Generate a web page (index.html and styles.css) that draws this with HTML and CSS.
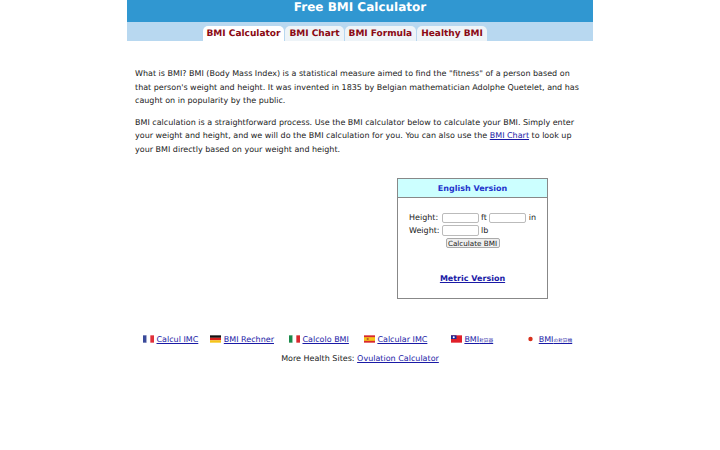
FILE: index.html
```html
<!DOCTYPE html>
<html lang="en">
<head>
<meta charset="utf-8">
<title>Free BMI Calculator</title>
<link rel="stylesheet" href="styles.css">
</head>
<body>
<div class="page">
  <header class="banner"><h1>Free BMI Calculator</h1></header>
  <nav class="tabbar">
    <a class="tab active" href="#">BMI Calculator</a>
    <a class="tab" href="#">BMI Chart</a>
    <a class="tab" href="#">BMI Formula</a>
    <a class="tab" href="#">Healthy BMI</a>
  </nav>
  <main class="content">
    <p>What is BMI? BMI (Body Mass Index) is a statistical measure aimed to find the "fitness" of a person based on that person's weight and height. It was invented in 1835 by Belgian mathematician Adolphe Quetelet, and has caught on in popularity by the public.</p>
    <p>BMI calculation is a straightforward process. Use the BMI calculator below to calculate your BMI. Simply enter your weight and height, and we will do the BMI calculation for you. You can also use the <a href="#">BMI Chart</a> to look up your BMI directly based on your weight and height.</p>
    <div class="calc-row">
      <section class="calc">
        <h2 class="calc-head">English Version</h2>
        <div class="calc-body">
          <div class="field"><label class="lbl">Height:</label><input class="num" type="text"><span>ft</span><input class="num" type="text"><span class="unit-in">in</span></div>
          <div class="field"><label class="lbl">Weight:</label><input class="num" type="text"><span>lb</span></div>
          <div class="submit"><button type="button">Calculate BMI</button></div>
          <a class="metric" href="#">Metric Version</a>
        </div>
      </section>
    </div>
    <div class="langs">
      <span class="lang fr"><svg class="flag" viewBox="0 0 12 8"><rect width="4" height="8" fill="#3a4a9a"/><rect x="4" width="4" height="8" fill="#fff"/><rect x="8" width="4" height="8" fill="#e0303a"/></svg><a href="#">Calcul IMC</a></span>
      <span class="lang de"><svg class="flag" viewBox="0 0 12 8"><rect width="12" height="2.7" fill="#111"/><rect y="2.7" width="12" height="2.7" fill="#d8201c"/><rect y="5.4" width="12" height="2.6" fill="#f5c518"/></svg><a href="#">BMI Rechner</a></span>
      <span class="lang it"><svg class="flag" viewBox="0 0 12 8"><rect width="4" height="8" fill="#1a8a4a"/><rect x="4" width="4" height="8" fill="#fff"/><rect x="8" width="4" height="8" fill="#d8282e"/></svg><a href="#">Calcolo BMI</a></span>
      <span class="lang es"><svg class="flag" viewBox="0 0 12 8"><rect width="12" height="8" fill="#d8282e"/><rect y="2" width="12" height="4" fill="#f5c518"/><rect x="3" y="3" width="2" height="2" fill="#c0502a"/></svg><a href="#">Calcular IMC</a></span>
      <span class="lang tw"><svg class="flag" viewBox="0 0 12 8"><rect width="12" height="8" fill="#e0202a"/><rect width="6" height="4" fill="#1a2a9a"/><circle cx="3" cy="2" r="1.1" fill="#fff"/></svg><a href="#">BMI<span class="cjk">計算器</span></a></span>
      <span class="lang jp"><svg class="flag" viewBox="0 0 12 8"><rect width="12" height="8" fill="#fff"/><circle cx="6" cy="4" r="2.4" fill="#d8301c"/></svg><a href="#">BMI<span class="cjk">の計算機</span></a></span>
    </div>
    <p class="more">More Health Sites: <a href="#">Ovulation Calculator</a></p>
  </main>
</div>
</body>
</html>
```
FILE: styles.css
```css
html, body { margin: 0; padding: 0; background: #fff; }
body { font-family: "DejaVu Sans", sans-serif; font-size: 8px; color: #222; text-rendering: geometricPrecision; }
a { color: #1a1aa6; }
.page { width: 466px; margin: 0 auto; }
.banner { background: #3097d1; height: 22px; overflow: hidden; }
.banner h1 { margin: 0; color: #fff; font-size: 12px; line-height: 14px; text-align: center; font-weight: bold; }
.tabbar { background: #b8d8f0; height: 19px; display: flex; align-items: flex-end; gap: 1px; padding-left: 75.5px; }
.tab { background: #eef4f8; color: #8b0a14; font-weight: bold; font-size: 9px; line-height: 13px; padding: 2px 4px 0; border-radius: 5px 5px 0 0; text-decoration: none; }
.tab.active { background: #fff; }
.content { padding: 26px 8px 0; }
.content p { margin: 0 0 8px; line-height: 13.6px; }
.calc-row { display: flex; justify-content: flex-end; margin: 21px 37px 0 0; }
.calc { width: 149px; height: 119px; border: 1px solid #888; }
.calc-head { margin: 0; height: 18px; line-height: 19px; background: #ccffff; border-bottom: 1px solid #888; color: #2233cc; font-size: 8px; text-align: center; font-weight: bold; }
.calc-body { padding: 14px 11px 0; }
.field { display: flex; align-items: center; height: 12.5px; gap: 2px; }
.lbl { width: 31px; flex: none; white-space: nowrap; }
.unit-in { margin-left: 1px; }
.num { width: 37px; height: 10.5px; box-sizing: border-box; padding: 0; margin: 0; border: 1px solid #bbb; border-radius: 2px; background: #fff; }
.submit { text-align: center; margin-top: 1px; }
.submit button { font: 7.2px "DejaVu Sans", sans-serif; height: 10.5px; width: 54px; padding: 0; background: #efefef; border: 1px solid #aaa; border-radius: 2px; color: #222; white-space: nowrap; }
.metric { display: block; margin-top: 26px; text-align: center; font-weight: bold; color: #1a1aa6; }
.langs { display: flex; margin: 36px 0 0 8px; }
.lang { display: flex; align-items: center; gap: 2.5px; }
.de { margin-left: 12px; }
.it { margin-left: 15px; }
.es { margin-left: 15px; }
.tw { margin-left: 23.5px; }
.jp { margin-left: 32px; }
.flag { width: 11px; height: 8px; margin-bottom: 2px; }
.cjk { font-family: "Noto Sans CJK TC", sans-serif; font-size: 4.7px; }
.more { text-align: center; margin: 7px 0 0 !important; }
```
